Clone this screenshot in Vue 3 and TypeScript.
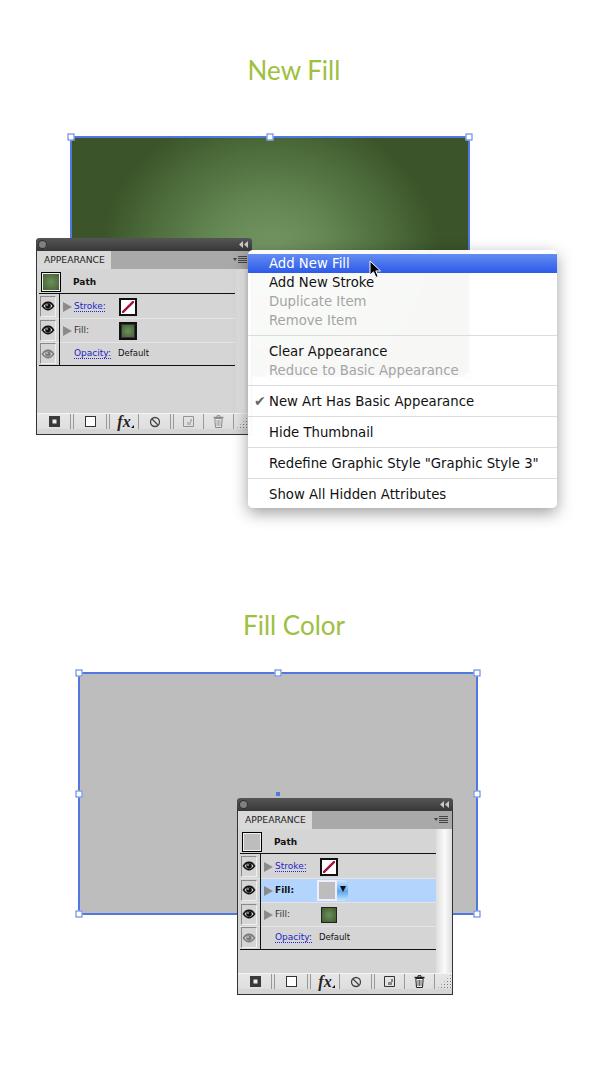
<script setup lang="ts">
type RowKind = 'stroke' | 'fill' | 'fillActive' | 'fillPlain' | 'opacity'

interface Panel {
  id: string
  thumb: string
  rows: RowKind[]
  dimFooter: boolean
}

const handles = (mid: boolean) => {
  const list: [number, number][] = [
    [0, 0], [50, 0], [100, 0],
    [0, 100], [50, 100], [100, 100],
  ]
  if (mid) list.push([0, 50], [100, 50])
  return list
}

const panels: Record<string, Panel> = {
  fill: { id: 'fill', thumb: 'green', rows: ['stroke', 'fill', 'opacity'], dimFooter: true },
  color: { id: 'color', thumb: 'grey', rows: ['stroke', 'fillActive', 'fillPlain', 'opacity'], dimFooter: false },
}

const scenes = [
  { id: 'new', title: 'New Fill', panel: panels.fill, mid: false, menu: true },
  { id: 'color', title: 'Fill Color', panel: panels.color, mid: true, menu: false },
]

const menuGroups = [
  [
    { label: 'Add New Fill', active: true },
    { label: 'Add New Stroke' },
    { label: 'Duplicate Item', off: true },
    { label: 'Remove Item', off: true },
  ],
  [
    { label: 'Clear Appearance' },
    { label: 'Reduce to Basic Appearance', off: true },
  ],
  [{ label: 'New Art Has Basic Appearance', checked: true }],
  [{ label: 'Hide Thumbnail' }],
  [{ label: 'Redefine Graphic Style "Graphic Style 3"' }],
  [{ label: 'Show All Hidden Attributes' }],
]

const rowLabel = (k: RowKind) => (k === 'stroke' ? 'Stroke:' : k === 'opacity' ? 'Opacity:' : 'Fill:')
</script>

<template>
  <div class="page">
    <section v-for="s in scenes" :key="s.id" class="scene" :class="`scene-${s.id}`">
      <h2 class="title">{{ s.title }}</h2>
      <div class="stage">
        <div class="art" />
        <span
          v-for="(h, i) in handles(s.mid)"
          :key="i"
          class="handle"
          :style="{ left: h[0] + '%', top: h[1] + '%' }"
        />
        <span v-if="s.mid" class="center-dot" />

        <div class="panel">
          <div class="panel-bar">
            <span class="bar-dot" />
            <svg width="9" height="7" viewBox="0 0 9 7">
              <path d="M4 0v7L0 3.5zM9 0v7L5 3.5z" fill="#c8c8c8" />
            </svg>
          </div>
          <div class="panel-tabs">
            <span class="tab">APPEARANCE</span>
            <span class="tab-menu">
              <svg width="16" height="10" viewBox="0 0 16 10">
                <path d="M1 3h4l-2 3z" fill="#444" />
                <path d="M6 1.5h9M6 3.5h9M6 5.5h9M6 7.5h9" stroke="#444" stroke-width="1" />
              </svg>
            </span>
          </div>
          <div class="panel-body">
            <div class="panel-main">
              <div class="path-row">
                <span class="thumb" :class="`thumb-${s.panel.thumb}`" />
                <span class="path-name">Path</span>
              </div>
              <div class="rows">
                <div
                  v-for="(k, i) in s.panel.rows"
                  :key="i"
                  class="row"
                  :class="{ 'row-active': k === 'fillActive' }"
                >
                  <span class="eye-cell">
                    <span class="eye-frame">
                      <svg width="14" height="10" viewBox="0 0 14 10" :class="{ 'eye-dim': k === 'opacity' }">
                        <path d="M0.5 5C3 1 5 0.5 7 0.5S11 1 13.5 5C11 8.5 9 9.5 7 9.5S3 8.5 0.5 5z" fill="#111" />
                        <path d="M2.5 5C4 3 5 2.5 7 2.5S10 3 11.5 5C10 7 9 7.8 7 7.8S4 7 2.5 5z" fill="#ddd" />
                        <circle cx="7" cy="5" r="2.8" fill="#111" />
                        <circle cx="6" cy="4" r="0.8" fill="#fff" />
                      </svg>
                    </span>
                  </span>
                  <span class="row-content">
                    <span v-if="k !== 'opacity'" class="triangle" />
                    <span class="label" :class="{ 'label-link': k === 'stroke' || k === 'opacity', 'label-bold': k === 'fillActive' }">
                      {{ rowLabel(k) }}
                    </span>
                    <span v-if="k === 'stroke'" class="swatch swatch-none">
                      <svg width="12" height="12" viewBox="0 0 12 12"><path d="M0 12L12 0" stroke="#a0153e" stroke-width="2.4" /></svg>
                    </span>
                    <span v-else-if="k === 'fill'" class="swatch swatch-green" />
                    <span v-else-if="k === 'fillPlain'" class="swatch-plain" />
                    <span v-else-if="k === 'fillActive'" class="swatch-drop">
                      <span class="drop-color" />
                      <span class="drop-btn"><i /></span>
                    </span>
                    <span v-else class="default">Default</span>
                  </span>
                </div>
              </div>
              <div class="filler" />
            </div>
            <div class="scroll" />
          </div>
          <div class="panel-foot">
            <span class="foot-btn wide">
              <svg width="11" height="11" viewBox="0 0 11 11"><rect width="11" height="11" fill="#3a3a3a" /><rect x="3.5" y="3.5" width="4" height="4" fill="#eee" /></svg>
            </span>
            <span class="foot-btn wide">
              <svg width="11" height="11" viewBox="0 0 11 11"><rect x="0.5" y="0.5" width="10" height="10" fill="#fff" stroke="#333" /></svg>
            </span>
            <span class="foot-btn fx">fx<i /></span>
            <span class="foot-btn wide">
              <svg width="12" height="12" viewBox="0 0 12 12"><circle cx="6" cy="6" r="4.5" fill="none" stroke="#444" stroke-width="1.3" /><path d="M3 3l6 6" stroke="#444" stroke-width="1.3" /></svg>
            </span>
            <span class="foot-btn" :class="{ dim: s.panel.dimFooter }">
              <svg width="11" height="11" viewBox="0 0 11 11"><path d="M0.5 0.5h10v10h-10z" fill="#e4e4e4" stroke="#333" /><path d="M4 6h4v3H4z" fill="#888" /><path d="M8 3v3" stroke="#222" /></svg>
            </span>
            <span class="foot-btn" :class="{ dim: s.panel.dimFooter }">
              <svg width="11" height="13" viewBox="0 0 11 13"><path d="M0.5 2.5h10" stroke="#222" stroke-width="1.4" /><path d="M4 2V0.7h3V2" fill="none" stroke="#222" /><path d="M1.8 3.5h7.4l-0.7 9h-6z" fill="#eee" stroke="#222" /><path d="M4 5v6M5.5 5v6M7 5v6" stroke="#444" stroke-width="0.8" /></svg>
            </span>
            <span class="grip" />
          </div>
        </div>

        <div v-if="s.menu" class="menu">
          <div v-for="(g, gi) in menuGroups" :key="gi" class="menu-group" :class="{ 'menu-group-first': gi === 0 }">
            <div
              v-for="item in g"
              :key="item.label"
              class="menu-item"
              :class="{ active: item.active, off: item.off }"
            >
              <span v-if="item.checked" class="check">✔</span>
              {{ item.label }}
            </div>
          </div>
          <svg class="cursor" width="14" height="19" viewBox="0 0 14 19">
            <path d="M1 1v14l3.5-3.2 2.4 5.6 2.3-1-2.4-5.500h4.700z" fill="#000" stroke="#fff" stroke-width="1" />
          </svg>
        </div>
      </div>
    </section>
  </div>
</template>

<style scoped>
.page {
  width: 600px;
  height: 1080px;
  overflow: hidden;
  background: #fff;
  font-family: "DejaVu Sans", sans-serif;
}

.scene-new {
  height: 555px;
}

.title {
  margin: 0;
  padding: 55px 12px 0 0;
  font-family: Lato, sans-serif;
  font-size: 26px;
  font-weight: 400;
  line-height: 30px;
  text-align: center;
  color: #9dc03e;
}

.stage {
  display: flow-root;
  position: relative;
  width: 398px;
}

.scene-new .stage {
  height: 239px;
  margin: 52px 0 0 71px;
}

.scene-color .stage {
  height: 241px;
  margin: 33px 0 0 79px;
}

.art {
  box-sizing: border-box;
  height: calc(100% + 2px);
  margin: -1px;
  border: 2px solid #4f79e0;
}

.scene-new .art {
  background: radial-gradient(ellipse 170px 150px at 50% 50%, #769766 0%, #648853 35%, #4e6e3d 70%, #3b5429 100%);
}

.scene-color .art {
  background: #bdbdbd;
}

.handle {
  position: absolute;
  box-sizing: border-box;
  width: 7px;
  height: 7px;
  border: 1.5px solid #4f79e0;
  background: #fff;
  transform: translate(-50%, -50%);
}

.center-dot {
  position: absolute;
  left: 197px;
  top: 119px;
  width: 4px;
  height: 4px;
  background: #4f79e0;
}

/* panel */
.panel {
  position: absolute;
  display: flex;
  flex-direction: column;
  box-sizing: border-box;
  width: 216px;
  height: 197px;
  border: 1px solid #333;
  border-top: 0;
  border-radius: 4px 4px 0 0;
  background: #d5d5d5;
  color: #111;
}

.scene-new .panel {
  left: -35px;
  top: 101px;
}

.scene-color .panel {
  left: 158px;
  top: 125px;
}

.panel-bar {
  display: flex;
  flex: none;
  align-items: center;
  justify-content: space-between;
  height: 13px;
  margin: 0 -1px;
  padding: 0 4px 0 2px;
  border-radius: 4px 4px 0 0;
  background: linear-gradient(#555, #383838);
}

.bar-dot {
  width: 9px;
  height: 9px;
  border-radius: 50%;
  background: #808080;
  box-shadow: inset 0 0 0 1px #2a2a2a;
}

.panel-tabs {
  display: flex;
  flex: none;
  justify-content: space-between;
  height: 18px;
  background: #a9a9a9;
}

.tab {
  display: flex;
  align-items: center;
  padding: 0 6px 2px 7px;
  background: #d9d9d9;
  font-size: 9.2px;
  color: #222;
}

.tab-menu {
  display: flex;
  align-items: center;
  padding-right: 3px;
}

.panel-body {
  display: flex;
  flex: 1;
  min-height: 0;
}

.panel-main {
  display: flex;
  flex: 1;
  flex-direction: column;
  padding: 2px 0 0 2px;
}

.scroll {
  width: 16px;
  background: linear-gradient(90deg, #d8d8d8, #ececec 55%, #dadada);
}

.scene-color .scroll {
  background: linear-gradient(90deg, #dedede, #fafafa 55%, #dedede);
}

.path-row {
  display: flex;
  flex: none;
  box-sizing: border-box;
  align-items: center;
  height: 23px;
  border-bottom: 1px solid #111;
}

.thumb {
  box-sizing: border-box;
  width: 20px;
  height: 20px;
  margin-left: 2px;
  border: 1px solid #000;
  box-shadow: inset 0 0 0 1px #eee;
}

.thumb-green {
  background: radial-gradient(circle, #6c8f5c, #3f5a2d);
}

.thumb-grey {
  background: #bdbdbd;
}

.path-name {
  margin-left: 12px;
  font-size: 9px;
  font-weight: 700;
}

.rows {
  flex: none;
  padding-top: 1px;
  border-bottom: 1px solid #111;
}

.row {
  display: flex;
  height: 24px;
  box-sizing: border-box;
  border-bottom: 1px solid #e4e4e4;
}

.row:last-child {
  height: 22px;
  border-bottom: 0;
}

.eye-cell {
  display: flex;
  flex: none;
  align-items: center;
  box-sizing: border-box;
  width: 21px;
  margin-top: -1px;
  padding-left: 1px;
  border-right: 1px solid #111;
}

.eye-frame {
  display: flex;
  align-items: center;
  justify-content: center;
  box-sizing: border-box;
  width: 16px;
  height: 21px;
  border: 1px solid;
  border-color: #8a8a8a #efefef #efefef #8a8a8a;
}

.eye-dim {
  opacity: 0.45;
}

.row-content {
  display: flex;
  flex: 1;
  align-items: center;
  position: relative;
  font-size: 8.5px;
}

.row-active .row-content {
  background: #b3d4fd;
}

.triangle {
  position: absolute;
  left: 3px;
  width: 0;
  height: 0;
  border-top: 5px solid transparent;
  border-bottom: 5px solid transparent;
  border-left: 9px solid #8b8b8b;
}

.label {
  width: 45px;
  margin-left: 14px;
  padding-bottom: 2px;
  font-size: 9px;
  color: #333;
}

.label-link {
  color: #2424c8;
  text-decoration: underline dotted;
  text-underline-offset: 2px;
}

.label-bold {
  font-weight: 700;
  color: #111;
}

.swatch {
  display: block;
  box-sizing: border-box;
  width: 18px;
  height: 18px;
  border: 2px solid #111;
}

.swatch-none {
  padding: 0;
  background: #fff;
}

.swatch-none svg {
  display: block;
  margin: 1px;
}

.swatch-green {
  background: radial-gradient(circle, #6c8f5c, #3f5a2d);
  box-shadow: inset 0 0 0 1px #333;
}

.swatch-plain {
  box-sizing: border-box;
  width: 16px;
  height: 16px;
  margin-left: 1px;
  border: 1px solid #222;
  background: radial-gradient(circle, #6c8f5c, #3f5a2d);
}

.swatch-drop {
  display: flex;
  box-sizing: border-box;
  width: 31px;
  height: 21px;
  margin-left: -3px;
  border-radius: 0 4px 4px 0;
}

.drop-color {
  box-sizing: border-box;
  width: 20px;
  border: 2px solid #eef;
  background: #bdbdbd;
}

.drop-btn {
  display: flex;
  flex: 1;
  justify-content: center;
  padding-top: 6px;
  border-radius: 0 5px 5px 0;
  background: linear-gradient(#cfe4fb, #5ea8ee 55%, #c8e6ff);
}

.drop-btn i {
  width: 0;
  height: 0;
  border-top: 6px solid #111;
  border-left: 3px solid transparent;
  border-right: 3px solid transparent;
}

.default {
  margin-left: -1px;
  padding-bottom: 2px;
  color: #111;
}

.filler {
  flex: 1;
}

.panel-foot {
  display: flex;
  flex: none;
  align-items: center;
  height: 15px;
  margin-bottom: 5px;
  padding-left: 2px;
  background: linear-gradient(#e6e6e6, #dedede);
  box-shadow: 0 -1px 0 #f4f4f4;
}

.foot-btn {
  display: flex;
  flex: none;
  align-items: center;
  justify-content: center;
  box-sizing: border-box;
  width: 30px;
  height: 100%;
  border-right: 1px solid #999;
}

.foot-btn.wide {
  width: 35px;
  border-right: 4px double #999;
}

.foot-btn:nth-child(2) {
  width: 36px;
}

.foot-btn.dim svg {
  opacity: 0.45;
}

.fx {
  position: relative;
  width: 29px;
  font-family: "Liberation Serif", serif;
  font-size: 16px;
  font-style: italic;
  font-weight: 700;
  color: #222;
}

.fx i {
  position: absolute;
  right: 4px;
  bottom: 1px;
  border-bottom: 3px solid #111;
  border-left: 3px solid transparent;
}

.grip {
  flex: 1;
  align-self: stretch;
  margin-left: 2px;
  background-image: radial-gradient(circle, #777 0.6px, transparent 0.8px);
  background-size: 3px 3px;
  background-position: right bottom;
  clip-path: polygon(100% 0, 100% 100%, 0 100%);
}

/* popup */
.menu {
  position: absolute;
  left: 177px;
  top: 113px;
  box-sizing: border-box;
  width: 309px;
  height: 258px;
  padding-top: 4px;
  border-radius: 5px;
  background: rgba(255, 255, 255, 0.96);
  box-shadow: 0 5px 16px rgba(0, 0, 0, 0.38);
  font-size: 13.25px;
  color: #111;
}

.menu-group {
  padding: 6px 0 5px;
  border-bottom: 1px solid #dcdcdc;
}

.menu-group-first {
  padding-top: 0;
}

.menu-group:last-of-type {
  border-bottom: 0;
}

.menu-item {
  position: relative;
  height: 19px;
  padding-left: 21px;
  line-height: 19px;
  white-space: nowrap;
}

.menu-item.active {
  background: linear-gradient(#648cf2, #2c5ae8);
  color: #fff;
}

.menu-item.off {
  color: #a4a4a4;
}

.check {
  position: absolute;
  left: 6px;
  font-size: 14px;
  color: #666;
}

.cursor {
  position: absolute;
  left: 121px;
  top: 10px;
}
</style>
